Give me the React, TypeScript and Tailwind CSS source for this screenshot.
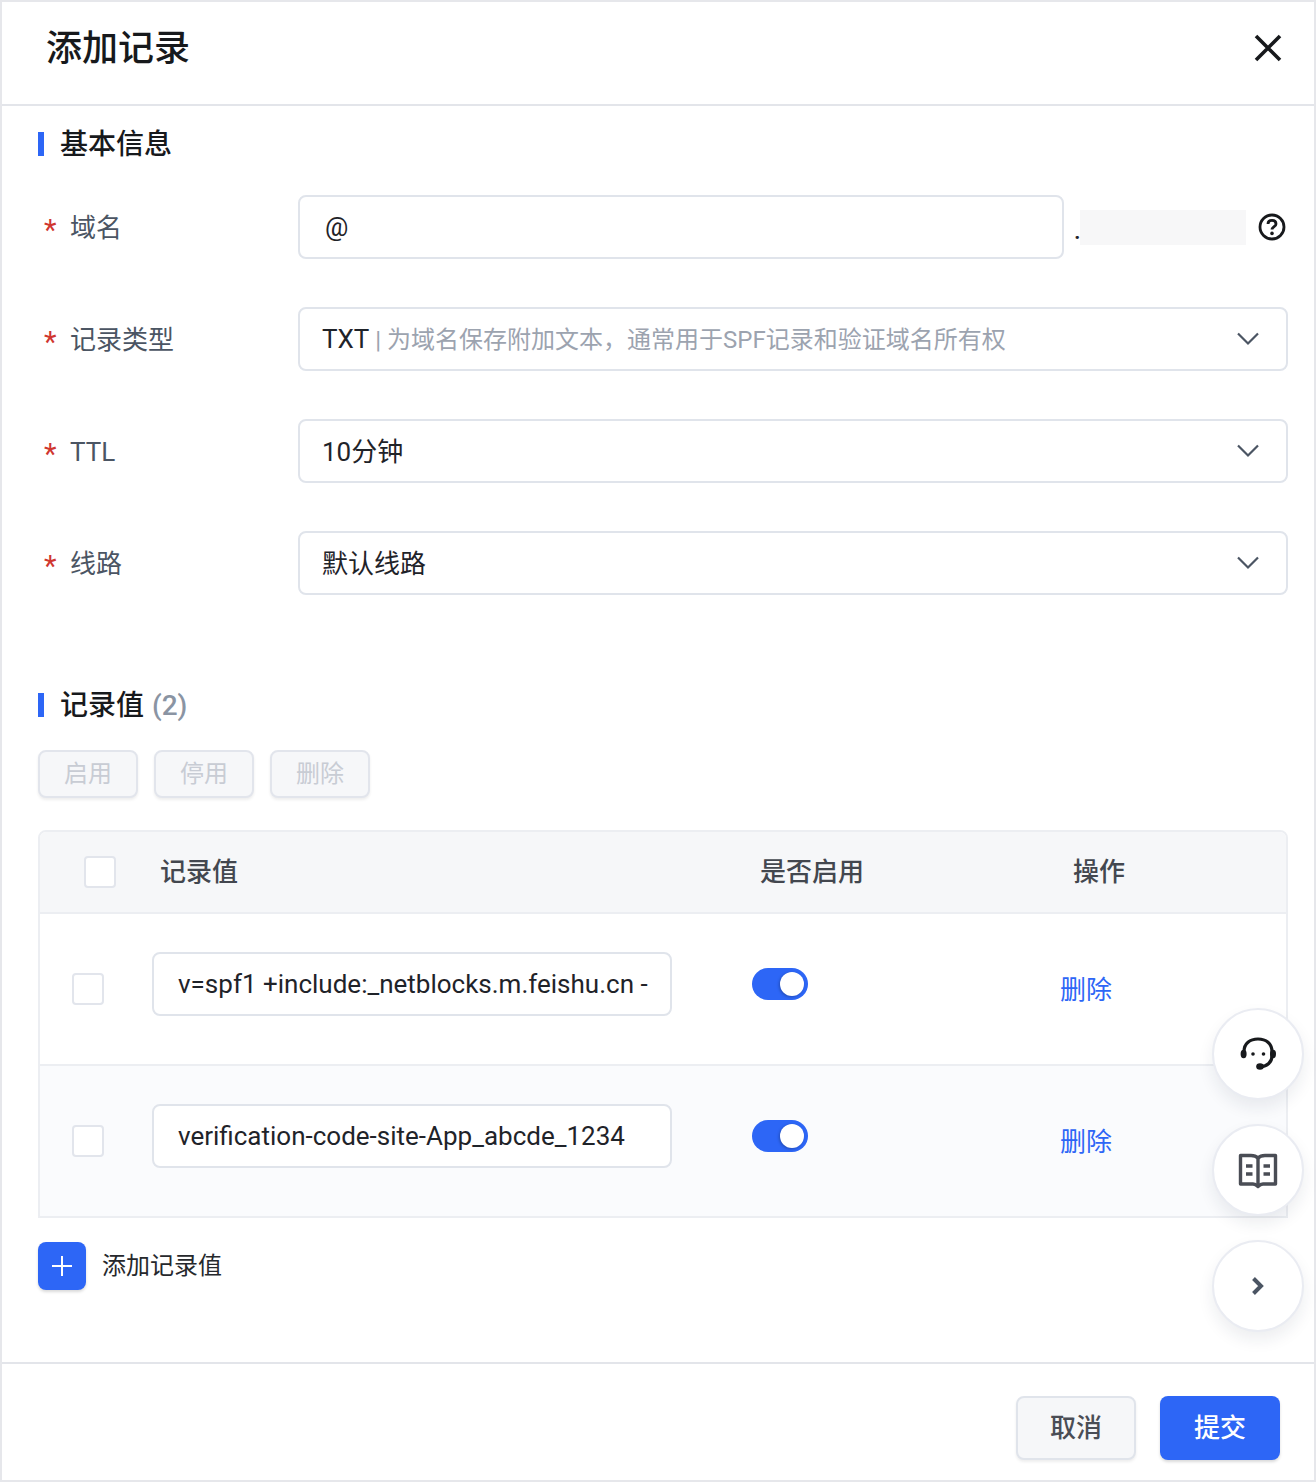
import React from "react";

const FONT = 'font-["Roboto","Noto_Sans_CJK_SC",sans-serif]';

function Chevron() {
  return (
    <svg width="24" height="16" viewBox="0 0 24 16" fill="none" className="shrink-0">
      <path d="M2 2.5 L12 12.5 L22 2.5" stroke="#4b5563" strokeWidth="2.2" />
    </svg>
  );
}

function SectionTitle({ children }: { children: React.ReactNode }) {
  return (
    <div className="flex items-center h-[24px]">
      <span className="w-[6px] h-[24px] bg-[#2d66f6]" />
      <span className="ml-[16px] pt-[2px] text-[28px] leading-[24px] font-medium text-[#17191c]">{children}</span>
    </div>
  );
}

function Label({ children }: { children: React.ReactNode }) {
  return (
    <div className="w-[260px] shrink-0 flex items-center text-[26px] leading-[32px] text-[#4b5563]">
      <span className="w-[32px] pl-[6px] pt-[6px] text-[29px] leading-[32px] text-[#d0362f]">*</span>
      <span className="pt-[2px]">{children}</span>
    </div>
  );
}

function Select({ children }: { children: React.ReactNode }) {
  return (
    <div className="flex-1 h-[64px] rounded-[8px] border-2 border-[#e0e4eb] bg-white pl-[22px] pr-[26px] flex items-center justify-between">
      <div className="pt-[1px] text-[26px] leading-[32px] text-[#1f2329]">{children}</div>
      <Chevron />
    </div>
  );
}

function GhostButton({ children }: { children: React.ReactNode }) {
  return (
    <button className="w-[100px] h-[48px] rounded-[8px] border-2 border-[#e2e5ec] bg-[#f6f7f9] text-[24px] text-[#c8ccd4] shadow-[0_2px_3px_rgba(0,0,0,0.07)]">
      {children}
    </button>
  );
}

function Checkbox() {
  return <span className="block w-[32px] h-[32px] rounded-[4px] border-2 border-[#e2e5ec] bg-white" />;
}

function Toggle() {
  return (
    <span className="flex w-[56px] h-[32px] rounded-full bg-[#2d66f6] justify-end items-center pr-[4px]">
      <span className="block w-[24px] h-[24px] rounded-full bg-white shadow-[-1px_1px_3px_rgba(0,0,0,0.25)]" />
    </span>
  );
}

function Row({ value, alt }: { value: string; alt?: boolean }) {
  return (
    <div className={`h-[150px] flex items-start ${alt ? "bg-[#fafbfd]" : "bg-white"}`}>
      <div className="w-[112px] pl-[32px] pt-[59px]">
        <Checkbox />
      </div>
      <div className="w-[520px] h-[64px] mt-[38px] rounded-[8px] border-2 border-[#e0e4eb] bg-white pl-[24px] flex items-center text-[26px] text-[#1f2329] whitespace-nowrap overflow-hidden">
        {value}
      </div>
      <div className="ml-[80px] mt-[54px]">
        <Toggle />
      </div>
      <div className="ml-[252px] mt-[60px] text-[26px] leading-[32px] text-[#2d66f6]">删除</div>
    </div>
  );
}

function FloatCircle({ className, children }: { className: string; children: React.ReactNode }) {
  return (
    <div
      className={`absolute left-[1210px] w-[92px] h-[92px] rounded-full bg-white border-2 border-[#eaecf2] shadow-[0_8px_16px_rgba(30,40,70,0.08)] flex items-center justify-center ${className}`}
    >
      {children}
    </div>
  );
}

export default function App() {
  return (
    <div className={`relative w-[1316px] h-[1482px] bg-white border-2 border-[#e6e7eb] flex flex-col ${FONT}`}>
      <header className="h-[104px] shrink-0 border-b-2 border-[#e3e5ea] pl-[44px] pr-[32px] flex items-center justify-between">
        <h1 className="text-[36px] leading-[48px] font-medium text-[#17191c] -mt-[8px]">添加记录</h1>
        <svg width="28" height="28" viewBox="0 0 28 28" fill="none" className="-mt-[10px]">
          <path d="M2 2 L26 26 M26 2 L2 26" stroke="#17191c" strokeWidth="3.6" />
        </svg>
      </header>

      <main className="h-[1256px] shrink-0 pl-[36px] pr-[26px] pt-[26px]">
        <SectionTitle>基本信息</SectionTitle>

        <div className="mt-[39px] flex flex-col gap-[48px]">
          <div className="flex items-center h-[64px]">
            <Label>域名</Label>
            <div className="w-[766px] h-[64px] rounded-[8px] border-2 border-[#e0e4eb] bg-white pl-[25px] flex items-center text-[26px] text-[#1f2329]">
              @
            </div>
            <span className="ml-[10px] mt-[8px] text-[24px] font-medium text-[#1f2329] w-[6px]">.</span>
            <span className="block w-[166px] h-[35px] bg-[#f7f7f8]" />
            <svg width="28" height="28" viewBox="0 0 28 28" fill="none" className="ml-[12px]">
              <circle cx="14" cy="14" r="12" stroke="#17191c" strokeWidth="2.8" />
              <path d="M10 11 C10 8.6 11.8 7.4 14 7.4 C16.4 7.4 18 8.8 18 10.9 C18 13.6 14 13.6 14 16.6" stroke="#17191c" strokeWidth="2.8" />
              <circle cx="14" cy="20.4" r="1.8" fill="#17191c" />
            </svg>
          </div>

          <div className="flex items-center h-[64px]">
            <Label>记录类型</Label>
            <Select>
              TXT <span className="text-[24px] text-[#9ca3af]">| 为域名保存附加文本，通常用于SPF记录和验证域名所有权</span>
            </Select>
          </div>

          <div className="flex items-center h-[64px]">
            <Label>TTL</Label>
            <Select>10分钟</Select>
          </div>

          <div className="flex items-center h-[64px]">
            <Label>线路</Label>
            <Select>默认线路</Select>
          </div>
        </div>

        <div className="mt-[98px]">
          <SectionTitle>
            记录值 <span className="ml-[1px] text-[#8a94a3]">(2)</span>
          </SectionTitle>
        </div>

        <div className="mt-[33px] flex gap-[16px]">
          <GhostButton>启用</GhostButton>
          <GhostButton>停用</GhostButton>
          <GhostButton>删除</GhostButton>
        </div>

        <div className="mt-[32px] w-[1250px] h-[388px] rounded-t-[8px] border-2 border-[#eceef2] overflow-hidden">
          <div className="h-[80px] bg-[#f6f7f9] flex items-center text-[26px] text-[#43474f] font-medium">
            <div className="w-[120px] pl-[44px]">
              <Checkbox />
            </div>
            <div className="w-[600px]">记录值</div>
            <div className="w-[313px]">是否启用</div>
            <div>操作</div>
          </div>
          <div className="border-t-2 border-[#eceef2]">
            <Row value="v=spf1 +include:_netblocks.m.feishu.cn -" />
          </div>
          <div className="border-t-2 border-[#eceef2]">
            <Row value="verification-code-site-App_abcde_1234" alt />
          </div>
        </div>

        <div className="mt-[24px] flex items-center">
          <span className="w-[48px] h-[48px] rounded-[8px] bg-[#2d66f6] flex items-center justify-center shadow-[0_2px_3px_rgba(0,0,0,0.15)]">
            <svg width="20" height="20" viewBox="0 0 20 20" fill="none">
              <path d="M10 0 V20 M0 10 H20" stroke="white" strokeWidth="2" />
            </svg>
          </span>
          <span className="ml-[16px] text-[24px] text-[#26282c]">添加记录值</span>
        </div>
      </main>

      <footer className="flex-1 border-t-2 border-[#e3e5ea] pr-[34px] pt-[32px] flex justify-end gap-[24px]">
        <button className="w-[120px] h-[64px] rounded-[8px] border-2 border-[#e0e4eb] bg-[#f6f7f9] text-[26px] font-medium text-[#4a4d55] shadow-[0_2px_3px_rgba(0,0,0,0.07)]">
          取消
        </button>
        <button className="w-[120px] h-[64px] rounded-[8px] bg-[#2d66f6] text-[26px] font-medium text-white shadow-[0_2px_3px_rgba(0,0,0,0.15)]">
          提交
        </button>
      </footer>

      <FloatCircle className="top-[1006px]">
        <svg width="40" height="40" viewBox="0 0 40 40" fill="none">
          <path d="M6 20 V17.5 C6 9.5 12 5 20 5 C28 5 34 9.5 34 17.5 V22 C34 28 29 32.5 23 32.5" stroke="#17191c" strokeWidth="3.2" strokeLinecap="round" />
          <ellipse cx="5.6" cy="20" rx="3" ry="4.2" fill="#17191c" />
          <ellipse cx="35" cy="20" rx="3" ry="4.2" fill="#17191c" />
          <ellipse cx="22" cy="32.5" rx="3.8" ry="3.2" fill="#17191c" />
          <circle cx="15" cy="20" r="1.8" fill="#17191c" />
          <circle cx="25.5" cy="20" r="1.8" fill="#17191c" />
        </svg>
      </FloatCircle>
      <FloatCircle className="top-[1122px]">
        <svg width="40" height="36" viewBox="0 0 40 36" fill="none" className="mt-[2px]">
          <path d="M20 5 C18 3 16 2.5 13 2.5 H2.5 V31 H15 C17 31 18.5 32 20 33.5 C21.5 32 23 31 25 31 H37.5 V2.5 H27 C24 2.5 22 3 20 5 Z" stroke="#4a4d55" strokeWidth="3.4" strokeLinejoin="round" />
          <path d="M20 5 V33" stroke="#4a4d55" strokeWidth="3.4" />
          <path d="M8 13 H14.5 M8 21 H14.5 M25.5 13 H32 M25.5 21 H32" stroke="#4a4d55" strokeWidth="3.4" />
        </svg>
      </FloatCircle>
      <FloatCircle className="top-[1238px]">
        <svg width="14" height="20" viewBox="0 0 14 20" fill="none">
          <path d="M2.5 2.5 L10 10 L2.5 17.5" stroke="#4b5563" strokeWidth="4" />
        </svg>
      </FloatCircle>
    </div>
  );
}
